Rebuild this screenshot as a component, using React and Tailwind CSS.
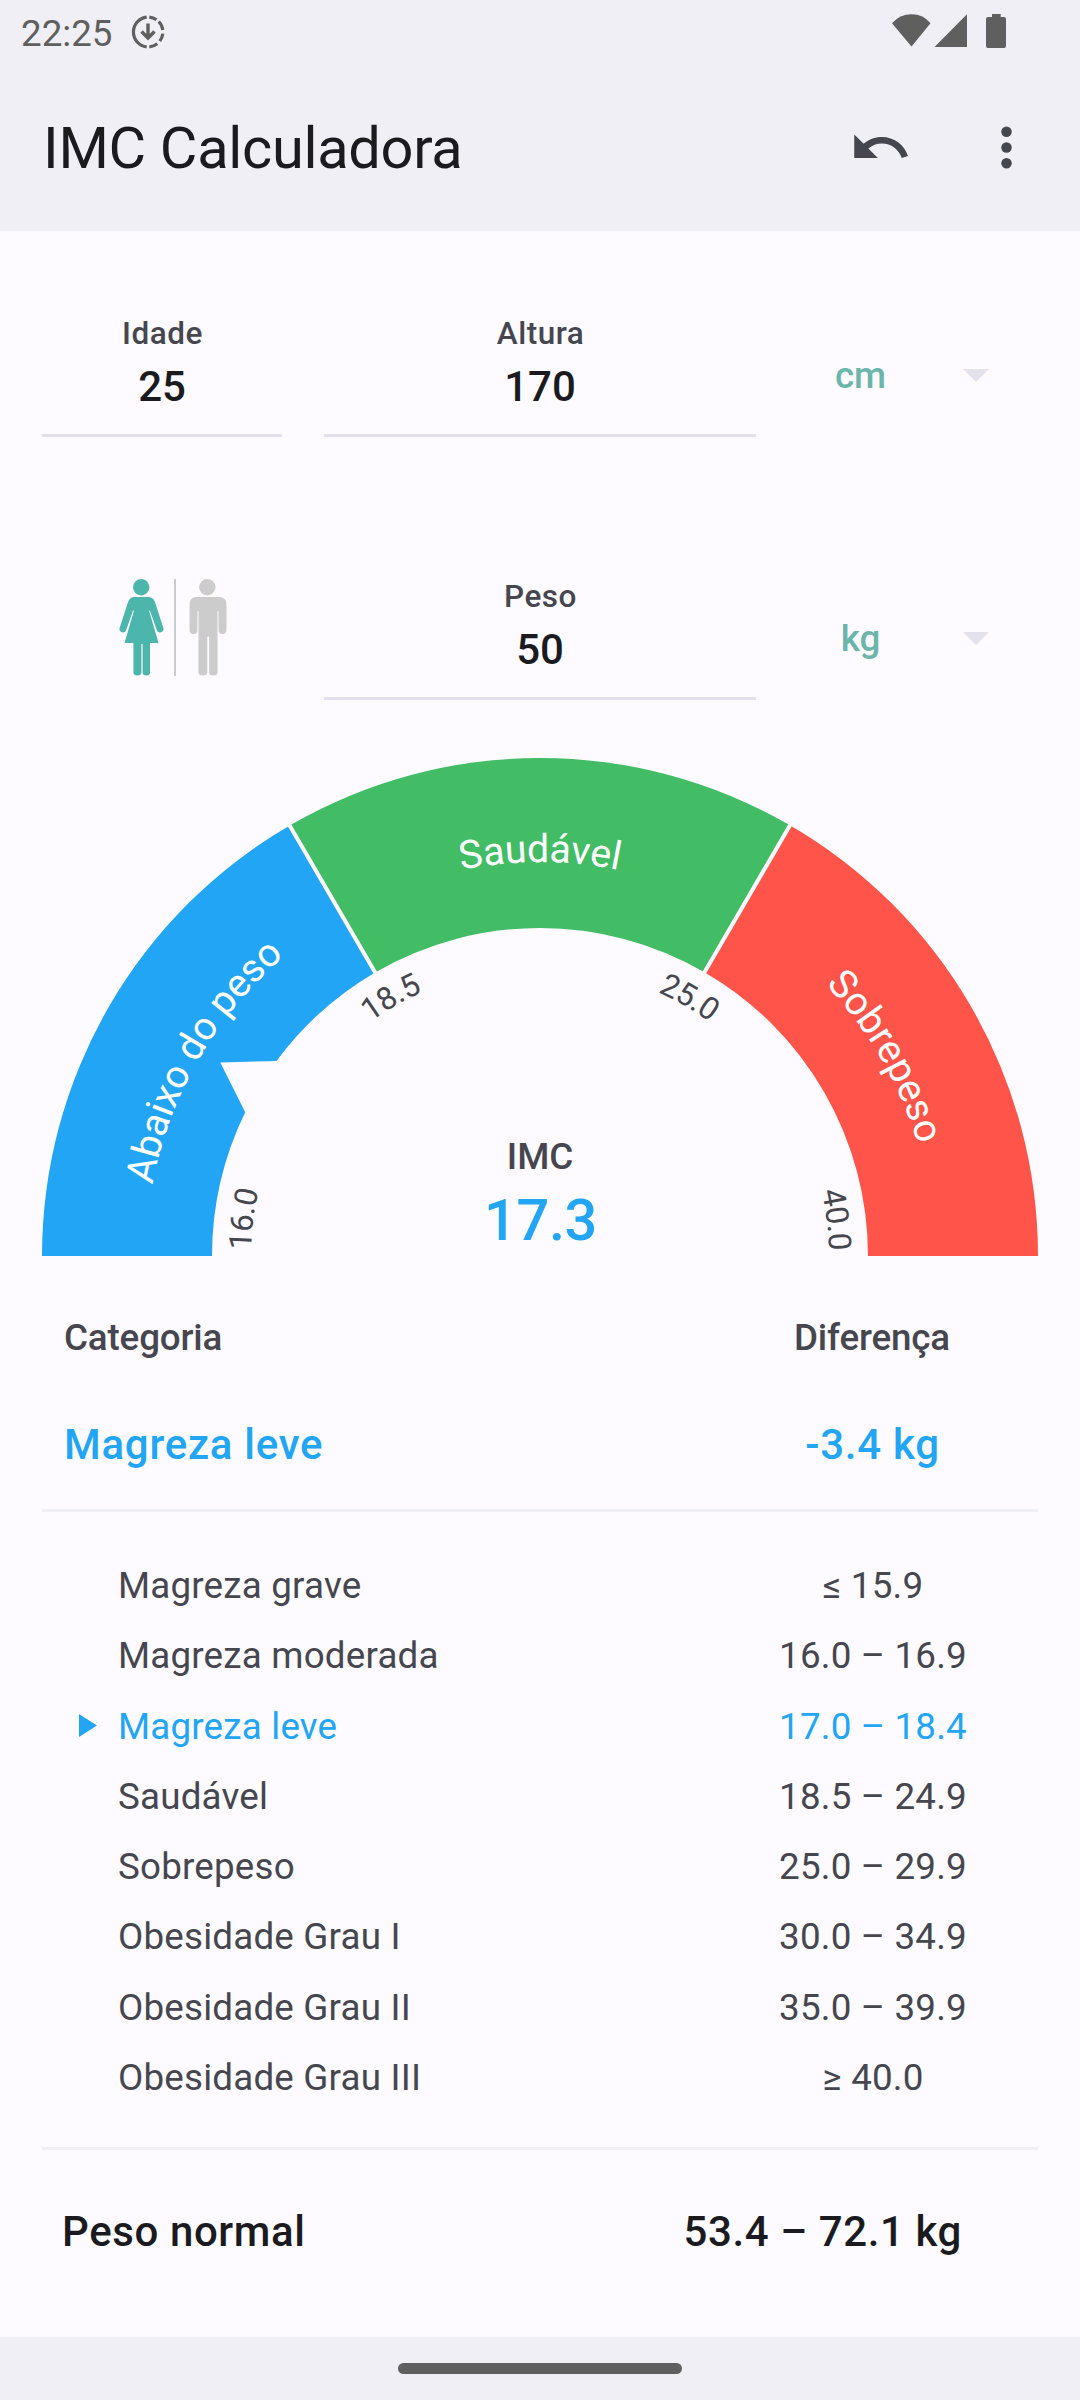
const categories = [
  { name: "Magreza grave", range: "≤ 15.9" },
  { name: "Magreza moderada", range: "16.0 – 16.9" },
  { name: "Magreza leve", range: "17.0 – 18.4", active: true },
  { name: "Saudável", range: "18.5 – 24.9" },
  { name: "Sobrepeso", range: "25.0 – 29.9" },
  { name: "Obesidade Grau I", range: "30.0 – 34.9" },
  { name: "Obesidade Grau II", range: "35.0 – 39.9" },
  { name: "Obesidade Grau III", range: "≥ 40.0" }
];

function StatusBar() {
  return (
    <div className="flex h-[62px] items-center justify-between pl-[21px] pr-[74px] text-[#5f5f5f]">
      <div className="flex items-center pt-[2px]">
        <span className="mt-[2px] text-[36.75px] leading-[43px]">22:25</span>
        <svg className="ml-[18px] h-[34px] w-[34px]" viewBox="0 0 34 34" fill="none" stroke="currentColor" strokeWidth="3.2">
          <path d="M15.7 2.1a15 15 0 0 0 0 29.8" />
          <path d="M18.3 2.1a15 15 0 0 1 7.2 2.6M27.7 6.5a15 15 0 0 1 4.1 8.5M31.8 18.6a15 15 0 0 1-3 7.5M26.3 28.8a15 15 0 0 1-8 3.1" />
          <path d="M17 8.5v14M10.5 16.5l6.5 6.5 6.5-6.5" strokeWidth="3.4" />
        </svg>
      </div>

      <svg className="h-[34px] w-[115px]" viewBox="0 0 115 34" fill="currentColor">
        <path d="M1 9.3Q8.500 0.2 20.5 0.2T39.500 9.3L20.5 32.5z" />
        <path d="M43.500 33L76 0.2V33z" />
        <path d="M101 0h8.700v3h3.300q2 0 2 2v27q0 2-2 2h-16q-2 0-2-2V5q0-2 2-2h4z" />
      </svg>
    </div>
  );
}

function AppBar() {
  return (
    <div className="flex h-[169px] items-center justify-between px-[42px] pt-[2px]">
      <h1 className="ml-[1px] text-[57.75px] leading-[68px] tracking-[-0.3px] text-[#1b1b1f]">IMC Calculadora</h1>
      <div className="flex gap-[63px] text-[#46464f]">
        <svg className="h-[63px] w-[63px]" viewBox="0 0 24 24" fill="currentColor">
          <path d="M12.5 8c-2.65 0-5.05.99-6.9 2.6L2 7v9h9l-3.62-3.62c1.39-1.16 3.16-1.88 5.12-1.88 3.54 0 6.55 2.31 7.6 5.5l2.37-.78C21.08 11.03 17.15 8 12.5 8z" />
        </svg>
        <svg className="h-[63px] w-[63px]" viewBox="0 0 24 24" fill="currentColor">
          <circle cx="12" cy="6" r="2" />
          <circle cx="12" cy="12" r="2" />
          <circle cx="12" cy="18" r="2" />
        </svg>
      </div>
    </div>
  );
}

function Field({ label, value }) {
  return (
    <div className="flex h-[125px] flex-col items-center border-b-[3px] border-[#e3e1ec] pt-[3px] font-medium">
      <span className="ml-[1px] text-[31.5px] leading-[37px] tracking-[0.5px] text-[#46464f]">{label}</span>
      <span className="mt-[10px] text-[42px] leading-[50px] text-[#1b1b1f]">{value}</span>
    </div>
  );
}

function UnitSelect({ unit }) {
  return (
    <div className="flex h-[125px] items-center pt-[2px]">
      <span className="w-[125px] text-center text-[36.75px] leading-[43px] font-medium text-[#6bb5ab]">
        {unit}
      </span>
      <svg className="ml-[40px] h-[13px] w-[26px]" viewBox="0 0 26 13" fill="#e3e1ec">
        <path d="M0 0h26L13 13z" />
      </svg>
    </div>
  );
}

function GenderPicker() {
  return (
    <svg className="mt-[4px] ml-[77px] h-[97px] w-[109px]" viewBox="0 0 109 97">
      {/* Woman */}
      <g fill="#4db6ac">
        <circle cx="22.2" cy="8.2" r="8.2" />
        <path d="M15.5 18h13.5q5 0 7 5l8.5 26.5c1 4-5.5 5.5-6.5 2L30.8 31.5h-.8L39.5 64H31v29.5q0 3-3.7 3t-3.700-3V65h-1.200v28.500q0 3-4 3t-4-3V64H5.500L15 31.500h-1L7 51.500c-1.500 3.500-7.500 2-6.500-2L9 23q2-5 6.500-5z" />
      </g>
      <path d="M56 0v97" stroke="#cccccc" strokeWidth="2" />
      {/* Man */}
      <g fill="#cccccc" transform="translate(1 0)">
        <circle cx="87.3" cy="8.2" r="8.2" />
        <path d="M76 18h23q7.5 0 7.5 7.5v25.5q0 4-4 4t-4-4V32h-1v61.5q0 3-4.200 3t-4.200-3V58q-1-1.500-1.800 0v35.500q0 3-4.400 3t-4.400-3V32h-1v19q0 4-4 4t-4-4V25.500q0-7.500 7-7.500z" />
      </g>
    </svg>
  );
}

function Gauge() {
  return (
    <svg className="block h-[500px] w-[996px]" viewBox="42 756 996 500" fontFamily="Roboto, sans-serif">
      <defs>
        <path id="bandArc" d="M146 1256A394 394 0 0 1 934 1256" />
        <path id="scaleArc" d="M251 1256A289 289 0 0 1 829 1256" />
      </defs>

      {/* Bands, the blue one is notched at the current value */}
      <path fill="#22a5f4" d="M42 1256A498 498 0 0 1 291 824.7L376 971.9A328 328 0 0 0 276.5 1061L220.3 1062.4L245.2 1112.2A328 328 0 0 0 212 1256z" />
      <path fill="#42bc65" d="M291 824.7A498 498 0 0 1 789 824.7L704 971.9A328 328 0 0 0 376 971.9z" />
      <path fill="#ff5449" d="M789 824.7A498 498 0 0 1 1038 1256H868A328 328 0 0 0 704 971.9z" />
      <path stroke="#fdfbff" strokeWidth="4" d="M287.3 821.5L376.9 975.5M792.2 821.5L702.6 975.5" />

      <g fill="#ffffff" fontSize="39.375" letterSpacing="-0.1" textAnchor="middle">
        <text>
          <textPath href="#bandArc" startOffset="16.667%">Abaixo do peso</textPath>
        </text>
        <text>
          <textPath href="#bandArc" startOffset="50%">Saudável</textPath>
        </text>
        <text>
          <textPath href="#bandArc" startOffset="83.333%">Sobrepeso</textPath>
        </text>
      </g>

      <g fill="#46464f" fontSize="31.5" letterSpacing="-0.3">
        <text>
          <textPath href="#scaleArc" startOffset="6">16.0</textPath>
        </text>
        <text textAnchor="middle">
          <textPath href="#scaleArc" startOffset="33.333%">18.5</textPath>
        </text>
        <text textAnchor="middle">
          <textPath href="#scaleArc" startOffset="66.667%">25.0</textPath>
        </text>
        <text textAnchor="end">
          <textPath href="#scaleArc" startOffset="902">40.0</textPath>
        </text>
      </g>

      <g textAnchor="middle" fontWeight="500">
        <text x="540" y="1169" fontSize="36.75" fill="#46464f">IMC</text>
        <text x="540.5" y="1240" fontSize="57.75" letterSpacing="-0.4" fill="#22a5f4">17.3</text>
      </g>
    </svg>
  );
}

function Result() {
  return (
    <div className="border-b-[3px] border-[#f0eff6] pl-[22px] font-medium">
      <div className="flex h-[107px] pt-[60px] text-[36.75px] leading-[43px] tracking-[-0.15px] text-[#46464f]">
        <span className="w-[642px]">Categoria</span>
        <span className="w-[332px] text-center">Diferença</span>
      </div>
      <div className="flex h-[146px] pt-[57px] text-[42px] leading-[50px] tracking-[0.75px] text-[#22a5f4]">
        <span className="w-[643px]">Magreza leve</span>
        <span className="w-[331px] text-center">-3.4 kg</span>
      </div>
    </div>
  );
}

function CategoryTable() {
  return (
    <div className="h-[638px] border-b-[3px] border-[#f0eff6] pt-[38.5px]">
      {categories.map((c) => (
        <div
          key={c.name}
          className={`flex h-[70.25px] items-center text-[36.75px] leading-[43px] tracking-[0.2px] ${
            c.active ? "text-[#22a5f4]" : "text-[#46464f]"
          }`}
        >
          <div className="flex w-[76px] pb-[2px] pl-[37px]">
            {c.active && (
              <svg className="h-[23px] w-[18px]" viewBox="0 0 18 23" fill="currentColor">
                <path d="M0 0l18 11.5L0 23z" />
              </svg>
            )}
          </div>
          <span className="w-[590px]">{c.name}</span>
          <span className="w-[330px] text-center">{c.range}</span>
        </div>
      ))}
    </div>
  );
}

export default function App() {
  return (
    <div className="flex h-[2400px] w-[1080px] flex-col overflow-hidden bg-[#fdfbff] font-[Roboto,sans-serif]">
      <header className="bg-[#f0eff6]">
        <StatusBar />
        <AppBar />
      </header>

      <main className="flex flex-1 flex-col px-[42px]">
        <div className="mt-[81px] grid grid-cols-[240px_432px_1fr] gap-x-[42px] gap-y-[138px]">
          <Field label="Idade" value="25" />
          <Field label="Altura" value="170" />
          <UnitSelect unit="cm" />
          <GenderPicker />
          <Field label="Peso" value="50" />
          <UnitSelect unit="kg" />
        </div>

        <div className="mt-[56px]">
          <Gauge />
        </div>

        <Result />
        <CategoryTable />

        <div className="flex h-[164px] items-center justify-between pl-[20px] pr-[76px] text-[42px] leading-[50px] font-medium tracking-[0.6px] text-[#1b1b1f]">
          <span>Peso normal</span>
          <span>53.4 – 72.1 kg</span>
        </div>
      </main>

      {/* Gesture bar */}
      <footer className="flex h-[63px] items-center justify-center bg-[#f0eff6]">
        <div className="h-[11px] w-[284px] rounded-full bg-[#5f5f61]" />
      </footer>
    </div>
  );
}
